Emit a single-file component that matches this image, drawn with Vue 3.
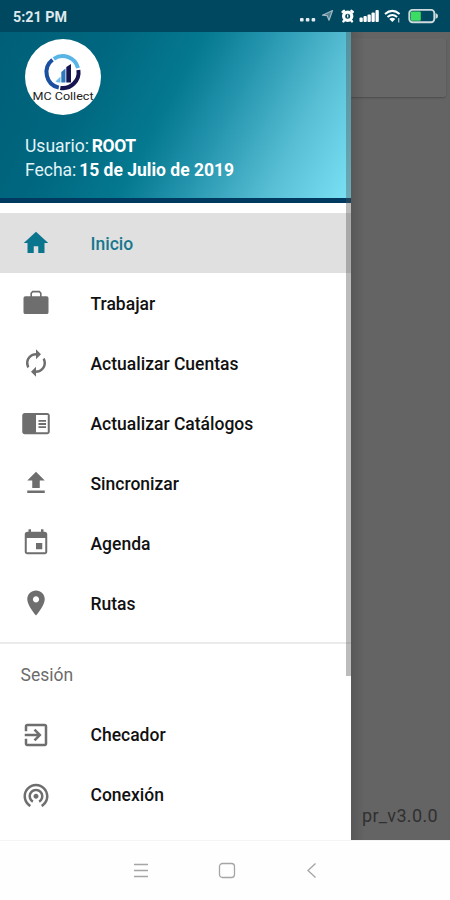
<template>
  <div class="phone">
    <!-- Barra de estado -->
    <header class="status-bar">
      <span class="clock">5:21 PM</span>
      <svg class="status-icons" width="140" height="18" viewBox="0 0 140 18">
        <g fill="#e3edf0">
          <rect x="0" y="11" width="3.6" height="3.4" rx="1" />
          <rect x="5.8" y="11" width="3.6" height="3.4" rx="1" />
          <rect x="11.6" y="11" width="3.6" height="3.4" rx="1" />
        </g>
        <path d="M22.5 8.2L32.5 3.5L29 13.2L27.2 8.7Z" fill="#4f7f91" stroke="#9db7c1" stroke-width="1.2" stroke-linejoin="round" />
        <!-- alarma -->
        <circle cx="47.7" cy="9.3" r="4.1" fill="none" stroke="#fff" stroke-width="3.2" />
        <path d="M42.6 5L44 3.8M52.8 5L51.4 3.8M44 13.7L43.4 14.4M51.4 13.7L52 14.4" stroke="#fff" stroke-width="2.4" stroke-linecap="round" />
        <path d="M47.7 7.4V10.4" stroke="#fff" stroke-width="1.2" />
        <!-- señal -->
        <g fill="#fff">
          <rect x="59.5" y="10.5" width="3.3" height="4.5" rx="1" />
          <rect x="63.5" y="9" width="3.3" height="6" rx="1" />
          <rect x="67.5" y="7.5" width="3.3" height="7.5" rx="1" />
          <rect x="71.5" y="5.5" width="3.3" height="9.5" rx="1" />
          <rect x="75.5" y="3" width="3.3" height="12" rx="1" />
        </g>
        <!-- wifi -->
        <path d="M85 7Q92.3 .8 99.6 7M87.5 10Q92.3 6 97.1 10" fill="none" stroke="#fff" stroke-width="2" />
        <path d="M89.3 12Q92.3 9.6 95.3 12L92.3 15Z" fill="#fff" />
        <path d="M98.7 11V15.5" stroke="#a6bfc8" stroke-width="1.3" />
        <!-- bateria -->
        <rect x="109.3" y="2.9" width="25" height="12.4" rx="3.2" fill="none" stroke="#cfdadd" stroke-width="1.9" />
        <path d="M135.5 6.3Q138 6.5 138 9T135.5 11.8Z" fill="#cfdadd" />
        <rect x="110.8" y="4.5" width="10" height="9.2" rx="1" fill="#3ddc62" />
      </svg>
    </header>

    <main class="screen">
      <aside class="drawer">
        <div class="drawer-header">
          <div class="avatar">
            <svg width="76" height="76" viewBox="0 0 76 76">
              <g fill="none" stroke-width="4">
                <path d="M28.8 19.8A15.8 15.8 0 0 1 53 29" stroke="#58b5e6" />
                <path d="M27.5 20.8A15.8 15.8 0 0 0 33.8 48.6" stroke="#1b50a0" />
                <path d="M53.4 31A15.8 15.8 0 0 1 35.3 48.9" stroke="#17154f" />
              </g>
              <path d="M30.5 42.5L35.5 37.5V43.5H33Z" fill="#6cbfec" />
              <path d="M36.3 33L40.5 29.5V43.5H36.3Z" fill="#2f78bd" />
              <path d="M41.3 28L46 25V43.5H41.3Z" fill="#17154f" />
              <text x="38" y="60.5" text-anchor="middle" textLength="61" lengthAdjust="spacingAndGlyphs" class="logo-text">MC Collect</text>
            </svg>
          </div>
          <p class="user-line">Usuario: <b class="user-name">ROOT</b></p>
          <p class="user-line">Fecha: <b>15 de Julio de 2019</b></p>
        </div>

        <nav class="menu">
          <a v-for="item in menuItems" :key="item.label" class="menu-item" :class="{ active: item.active }">
            <svg class="menu-icon" viewBox="0 0 24 24"><path :d="item.icon" /></svg>
            <span class="menu-label">{{ item.label }}</span>
          </a>
        </nav>

        <section class="session">
          <h2 class="session-title">Sesión</h2>
          <a v-for="item in sessionItems" :key="item.label" class="menu-item">
            <svg class="menu-icon" viewBox="0 0 24 24"><path :d="item.icon" /></svg>
            <span>{{ item.label }}</span>
          </a>
        </section>
        <div class="scrollbar"></div>
      </aside>

      <div class="backdrop">
        <div class="card"></div>
        <span class="version">pr_v3.0.0</span>
      </div>
    </main>

    <!-- Botones de navegacion -->
    <footer class="nav-bar">
      <svg width="18" height="18" viewBox="0 0 18 18"><path d="M2 2.5H16M2 8.5H16M2 14.5H16" /></svg>
      <svg width="18" height="18" viewBox="0 0 18 18"><rect x="1.5" y="1.5" width="15" height="14" rx="3" /></svg>
      <svg width="18" height="18" viewBox="0 0 18 18"><path d="M12.5 1.5L5 8.5L12.5 15.5" /></svg>
    </footer>
  </div>
</template>

<script setup>
const menuItems = [
  { label: "Inicio", active: true, icon: "M10.2 20v-5.5h3.6V20h5v-8h3L12 3 2.2 12h3v8z" },
  {
    label: "Trabajar",
    icon: "M20.5 6.5H16.5V4L15 2.2H9L7.5 4V6.5H3.5Q2 6.5 2 8V19.3Q2 20.8 3.5 20.8H20.5Q22 20.8 22 19.3V8Q22 6.5 20.5 6.5zM15.2 6.5H8.8V4.3L9.5 3.5H14.5L15.2 4.3z",
  },
  {
    label: "Actualizar Cuentas",
    icon: "M12 6v3l4-4-4-4v3c-4.42 0-8 3.58-8 8 0 1.57.46 3.03 1.24 4.26L6.7 14.8c-.45-.83-.7-1.79-.7-2.8 0-3.31 2.69-6 6-6zm6.76 1.74L17.3 9.2c.44.84.7 1.79.7 2.8 0 3.31-2.69 6-6 6v-3l-4 4 4 4v-3c4.42 0 8-3.58 8-8 0-1.57-.46-3.03-1.24-4.26z",
  },
  {
    label: "Actualizar Catálogos",
    icon: "M21 4H3c-1.1 0-2 .9-2 2v13c0 1.1.9 2 2 2h18c1.1 0 2-.9 2-2V6c0-1.1-.9-2-2-2zm.4 15.4h-9.4V5.6h9.4v13.8zm-1.4-9.9h-6V11h6V9.5zm0 2.5h-6v1.5h6V12zm0 2.5h-6V16h6v-1.5z",
  },
  { label: "Sincronizar", icon: "M9 16h6v-6h4l-7-7-7 7h4zm-4 2h14v2H5z" },
  {
    label: "Agenda",
    icon: "M17 12h-5v5h5v-5zM16 1v2H8V1H6v2H5c-1.11 0-1.99.9-1.99 2L3 19c0 1.1.89 2 2 2h14c1.1 0 2-.9 2-2V5c0-1.1-.9-2-2-2h-1V1h-2zm3.4 18.4H4.6V8h14.8v11.4z",
  },
  {
    label: "Rutas",
    icon: "M12 2C8.13 2 5 5.13 5 9c0 5.25 7 13 7 13s7-7.75 7-13c0-3.87-3.13-7-7-7zm0 9.5c-1.38 0-2.5-1.12-2.5-2.5s1.12-2.5 2.5-2.5 2.5 1.12 2.5 2.5-1.12 2.5-2.5 2.5z",
  },
];

const sessionItems = [
  {
    label: "Checador",
    icon: "M10.09 15.59L11.5 17l5-5-5-5-1.41 1.41L12.67 11H3v2h9.67l-2.58 2.59zM19 3H5c-1.11 0-2 .9-2 2v4h2V5h14v14H5v-4H3v4c0 1.1.89 2 2 2h14c1.1 0 2-.9 2-2V5c0-1.1-.9-2-2-2z",
  },
  {
    label: "Conexión",
    icon: "M12 11c-1.1 0-2 .9-2 2s.9 2 2 2 2-.9 2-2-.9-2-2-2zm6 2c0-3.31-2.69-6-6-6s-6 2.69-6 6c0 2.22 1.21 4.15 3 5.19l1-1.74c-1.19-.7-2-1.97-2-3.45 0-2.21 1.79-4 4-4s4 1.79 4 4c0 1.48-.81 2.75-2 3.45l1 1.74c1.79-1.04 3-2.97 3-5.19zM12 3C6.48 3 2 7.48 2 13c0 3.7 2.01 6.92 4.99 8.65l1-1.73C5.61 18.53 4 15.96 4 13c0-4.42 3.58-8 8-8s8 3.58 8 8c0 2.96-1.61 5.53-4 6.92l1 1.73c2.99-1.73 5-4.95 5-8.65 0-5.52-4.48-10-10-10z",
  },
];
</script>

<style>
body {
  margin: 0;
}
</style>

<style scoped>
.phone {
  display: flex;
  flex-direction: column;
  width: 450px;
  height: 900px;
  overflow: hidden;
  background: #fefefe;
  font-family: Roboto, "Liberation Sans", sans-serif;
}

.status-bar {
  display: flex;
  align-items: center;
  justify-content: space-between;
  box-sizing: border-box;
  height: 32px;
  padding: 0 10px 0 13px;
  background: #00485f;
}

.clock {
  padding-top: 1px;
  color: #dfe9ed;
  font-size: 14.3px;
  font-weight: 700;
}

.screen {
  display: flex;
  height: 808px;
}

.drawer {
  position: relative;
  width: 351px;
  background: #fff;
}

.drawer-header {
  box-sizing: border-box;
  height: 171px;
  padding: 7px 25px 0;
  border-bottom: 5px solid #003a60;
  background: linear-gradient(118deg, #005f78 0%, #00667f 25%, #047990 47%, #2696af 62%, #56bdd3 80%, #7be2f6 100%);
}

.avatar {
  width: 76px;
  height: 76px;
  margin-bottom: 19px;
  border-radius: 50%;
  overflow: hidden;
  background: #fff;
}

.logo-text {
  font-size: 10px;
  fill: #222;
}

.user-line {
  margin: 0;
  color: #e2f3f7;
  font-size: 17.5px;
  line-height: 24px;
  white-space: nowrap;
  word-spacing: -1.5px;
}

.user-line b {
  color: #fff;
  word-spacing: 0;
}

.user-line .user-name {
  letter-spacing: -0.4px;
}

.menu {
  padding: 10px 0 9px;
  border-bottom: 2px solid #ebebeb;
}

.menu-item {
  display: flex;
  align-items: center;
  gap: 40px;
  height: 60px;
  padding-left: 20.5px;
  color: #111;
  font-size: 17.5px;
  font-weight: 500;
}

.menu-label {
  padding-top: 2px;
}

.menu-icon {
  width: 30px;
  height: 30px;
  fill: #6e6e6e;
}

.menu-item.active {
  background: #e0e0e0;
  color: #17778d;
}

.active .menu-icon {
  fill: #0b758d;
}

.session-title {
  margin: 0;
  padding: 1px 0 0 20.5px;
  color: #6c6c6c;
  font-size: 17.5px;
  font-weight: 400;
  line-height: 60px;
}

/* encima del contenido del menu */
.scrollbar {
  position: absolute;
  top: 0;
  right: 0;
  width: 5px;
  height: 644px;
  background: rgba(80, 80, 80, 0.38);
}

.backdrop {
  display: flex;
  flex: 1;
  flex-direction: column;
  justify-content: space-between;
  background: linear-gradient(90deg, #585858, #646464 14px);
}

.card {
  height: 59px;
  margin: 6px 4px 0 0;
  border-radius: 0 3px 3px 0;
  background: linear-gradient(90deg, #5a5a5a, #676767 14px);
  box-shadow: 0 1px 2px rgba(0, 0, 0, 0.25);
}

.version {
  padding: 0 12px 12px 0;
  color: #303030;
  font-size: 18px;
  letter-spacing: 0.35px;
  line-height: 24px;
  text-align: right;
}

.nav-bar {
  display: flex;
  justify-content: center;
  gap: 67.5px;
  align-items: center;
  height: 60px;
  padding-left: 3px;
  box-sizing: border-box;
  border-top: 1px solid #f4f4f4;
}

.nav-bar svg {
  fill: none;
  stroke: #a5a5a5;
  stroke-width: 1.3;
}
</style>
